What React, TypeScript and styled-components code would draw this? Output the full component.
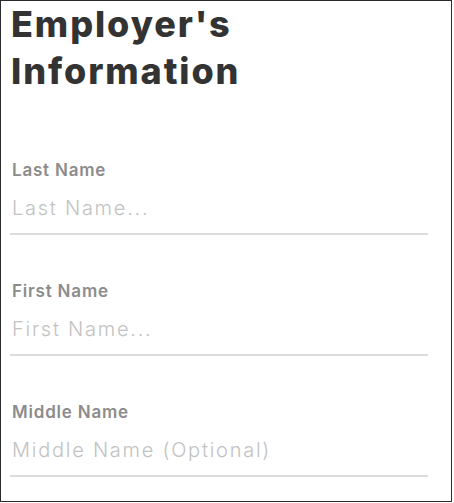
import React from 'react';
import styled, { createGlobalStyle } from 'styled-components';

const GlobalStyle = createGlobalStyle`
  body {
    margin: 0;
    background: #fff;
    font-family: Inter, "Noto Sans", sans-serif;
  }
`;

// Outer framed panel
const Panel = styled.div`
  width: 452px;
  height: 502px;
  box-sizing: border-box;
  border: 1px solid #2b2b2b;
  padding: 0 23px 0 9px;
`;

const Title = styled.h1`
  margin: 0 0 0 1px;
  font-size: 36px;
  line-height: 47px;
  font-weight: 800;
  color: #333;
  letter-spacing: 1.9px;
`;

const Form = styled.form`
  display: flex;
  flex-direction: column;
  gap: 46px;
  margin-top: 65px;
`;

const Field = styled.label`
  display: flex;
  flex-direction: column;
`;

const Label = styled.span`
  padding-left: 2px;
  font-size: 17px;
  line-height: 20px;
  font-weight: 600;
  color: #8c8c8c;
  letter-spacing: 0.8px;
`;

const Input = styled.input`
  width: 100%;
  box-sizing: border-box;
  margin-top: 15px;
  padding: 0 0 12px 2px;
  border: none;
  border-bottom: 2px solid #dcdcdc;
  outline: none;
  background: transparent;
  font-family: inherit;
  font-size: 20px;
  line-height: 26px;
  font-weight: 300;
  letter-spacing: 1.75px;
  color: #333;

  &::placeholder {
    color: #c2c2c2;
  }
`;

const fields = [
  { label: 'Last Name', placeholder: 'Last Name...' },
  { label: 'First Name', placeholder: 'First Name...' },
  { label: 'Middle Name', placeholder: 'Middle Name (Optional)' },
];

export default function App() {
  return (
    <>
      <GlobalStyle />
      <Panel>
        <Title>
          Employer's
          <br />
          Information
        </Title>
        <Form>
          {fields.map((f) => (
            <Field key={f.label}>
              <Label>{f.label}</Label>
              <Input placeholder={f.placeholder} />
            </Field>
          ))}
        </Form>
      </Panel>
    </>
  );
}
